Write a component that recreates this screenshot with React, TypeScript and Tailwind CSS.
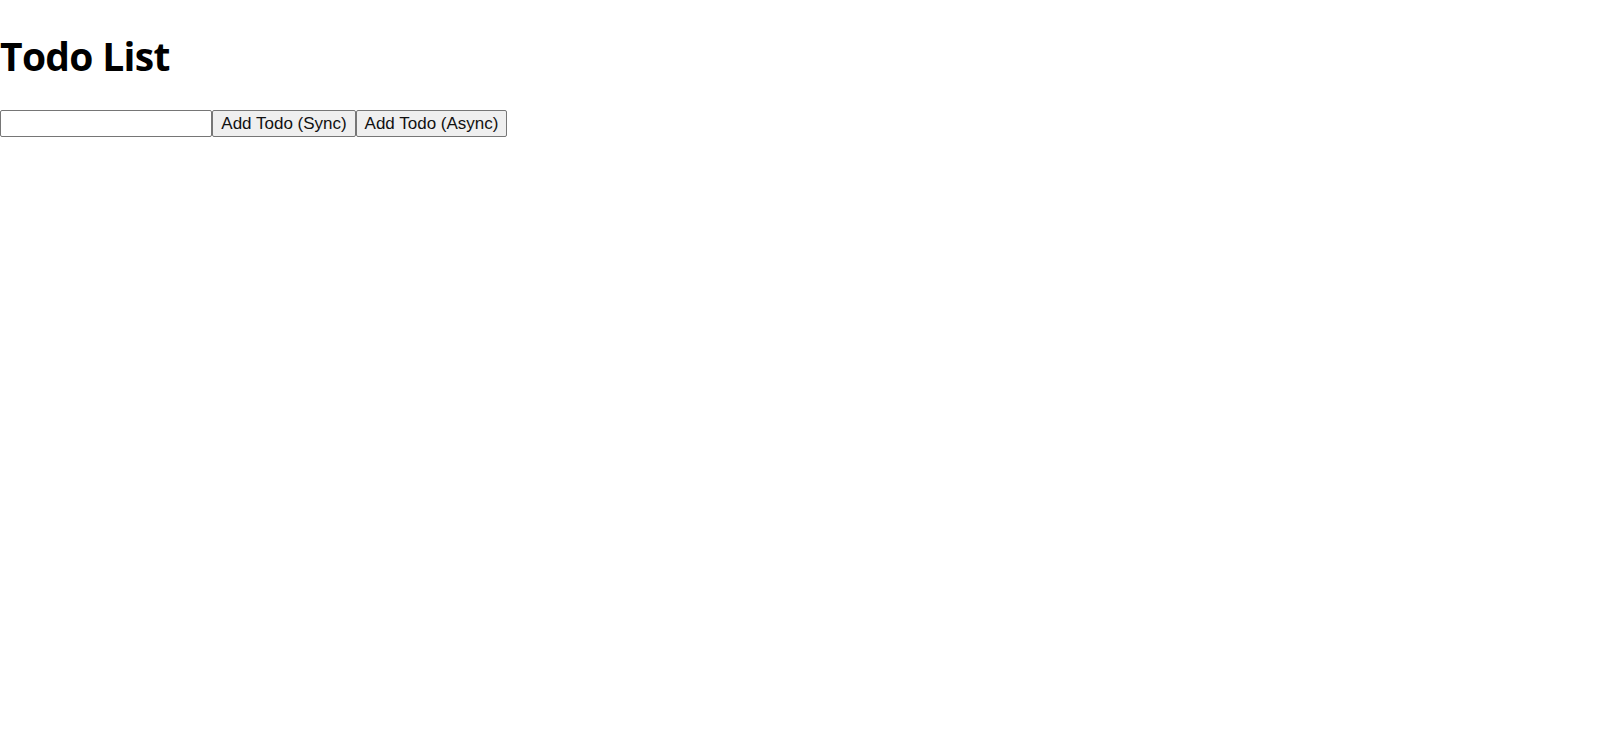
export default function App() {
  return (
    <div className="bg-white min-h-[745px] text-black">
      <h1 className="font-['Open_Sans',sans-serif] font-bold text-[39px] leading-[54px] pt-[29px] pb-[27px] tracking-[-0.7px]">
        Todo List
      </h1>
      <div className="flex items-stretch h-[27px] font-['Liberation_Sans',Arial,sans-serif] text-[17px]">
        <input
          type="text"
          className="w-[212px] h-[27px] border border-[#767676] rounded-[2px] px-[2px] bg-white outline-none"
        />
        <button className="w-[144px] h-[27px] border border-[#767676] rounded-[2px] bg-[#efefef] text-[#111] px-[6px] leading-[25px]">
          Add Todo (Sync)
        </button>
        <button className="w-[151px] h-[27px] border border-[#767676] rounded-[2px] bg-[#efefef] text-[#111] px-[6px] leading-[25px]">
          Add Todo (Async)
        </button>
      </div>
    </div>
  );
}
